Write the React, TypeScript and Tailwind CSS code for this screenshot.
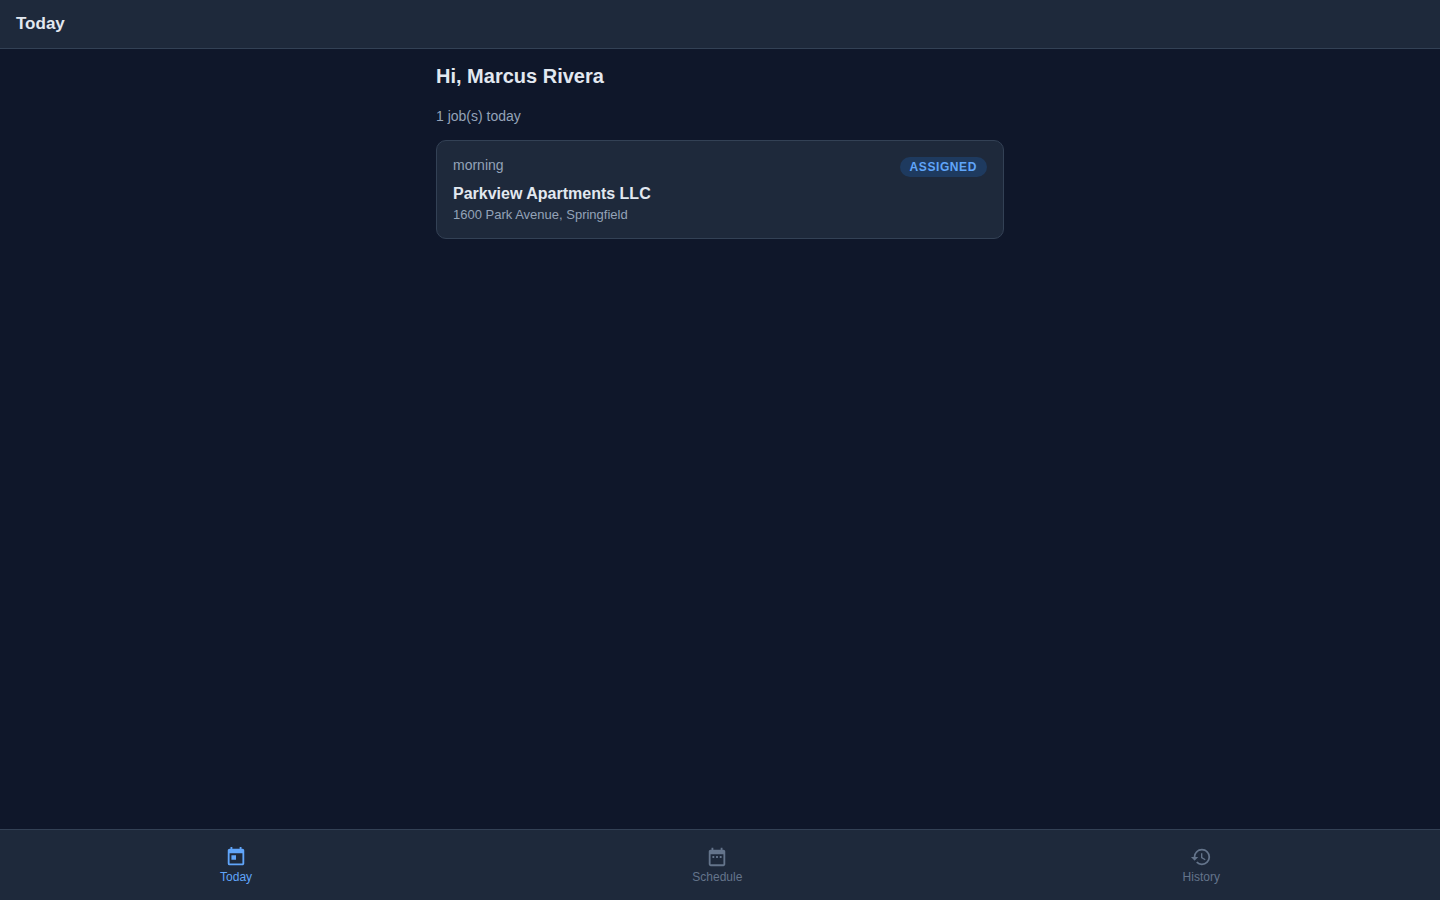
import clsx from "clsx";
import { useState } from "react";
import { MdDateRange, MdHistory, MdToday } from "react-icons/md";

interface IJob {
  id: number;
  slot: string;
  status: string;
  customer: string;
  address: string;
}

const jobs: IJob[] = [
  {
    id: 1,
    slot: "morning",
    status: "assigned",
    customer: "Parkview Apartments LLC",
    address: "1600 Park Avenue, Springfield",
  },
];

const tabs = [
  { label: "Today", href: "#today", Icon: MdToday },
  { label: "Schedule", href: "#schedule", Icon: MdDateRange },
  { label: "History", href: "#history", Icon: MdHistory },
];

function JobCard({ job }: { job: IJob }) {
  return (
    <a
      href={`#job-${job.id}`}
      className="block rounded-[10px] border border-[#334155] bg-[#1e293b] p-4"
    >
      <div className="flex items-start justify-between mb-2">
        <span className="text-sm leading-4 text-[#94a3b8]">{job.slot}</span>
        <span className="rounded-full bg-[#1e3a5f] px-2.5 py-0.5 text-xs font-semibold uppercase tracking-wider text-[#60a5fa]">
          {job.status}
        </span>
      </div>
      <h3 className="text-base leading-[18px] font-semibold text-[#e2e8f0]">
        {job.customer}
      </h3>
      <p className="mt-1 text-[13px] leading-[15px] text-[#94a3b8]">
        {job.address}
      </p>
    </a>
  );
}

function App() {
  const [active, setActive] = useState("Today");

  return (
    <div className="flex flex-col min-h-screen bg-[#0f172a] font-['Liberation_Sans',Arial,sans-serif] text-[#e2e8f0]">
      <header className="flex items-center h-[49px] px-4 border-b border-[#334155] bg-[#1e293b]">
        <h1 className="text-[17px] leading-5 font-semibold">Today</h1>
      </header>
      <main className="flex-1 w-full max-w-[600px] mx-auto p-4">
        <h2 className="text-xl leading-[23px] font-semibold">
          Hi, Marcus Rivera
        </h2>
        <p className="mt-5 mb-4 text-sm leading-4 text-[#94a3b8]">
          {jobs.length} job(s) today
        </p>
        <div className="flex flex-col gap-3">
          {jobs.map((job) => (
            <JobCard key={job.id} job={job} />
          ))}
        </div>
      </main>
      <nav className="sticky bottom-0 flex justify-around h-[71px] pt-4 border-t border-[#334155] bg-[#1e293b]">
        {tabs.map(({ label, href, Icon }) => (
          <a
            key={label}
            href={href}
            onClick={() => setActive(label)}
            className={clsx([
              "flex flex-col items-center gap-0.5 px-3 text-xs leading-[14px]",
              active === label ? "text-[#60a5fa]" : "text-[#64748b]",
            ])}
          >
            <Icon size={22} />
            {label}
          </a>
        ))}
      </nav>
    </div>
  );
}

export default App;
